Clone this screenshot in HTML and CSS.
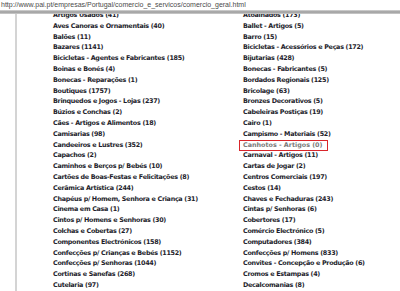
FILE: index.html
```html
<!DOCTYPE html>
<html lang="pt">
<head>
    <meta charset="UTF-8">
    <title>Comércio Geral</title>
    <link rel="stylesheet" href="styles.css">
</head>
<body>

<div class="address">http://www.pai.pt/empresas/Portugal/comercio_e_servicos/comercio_geral.html</div>
<div class="rule"></div>

<div class="page">
    <div class="list">
        <ul class="col">
            <li>Artigos Usados (41)</li>
            <li>Aves Canoras e Ornamentais (40)</li>
            <li>Balões (11)</li>
            <li>Bazares (1141)</li>
            <li>Bicicletas - Agentes e Fabricantes (185)</li>
            <li>Boinas e Bonés (4)</li>
            <li>Bonecas - Reparações (1)</li>
            <li>Boutiques (1757)</li>
            <li>Brinquedos e Jogos - Lojas (237)</li>
            <li>Búzios e Conchas (2)</li>
            <li>Cães - Artigos e Alimentos (18)</li>
            <li>Camisarias (98)</li>
            <li>Candeeiros e Lustres (352)</li>
            <li>Capachos (2)</li>
            <li>Caminhos e Berços p/ Bebés (10)</li>
            <li>Cartões de Boas-Festas e Felicitações (8)</li>
            <li>Cerâmica Artística (244)</li>
            <li>Chapéus p/ Homem, Senhora e Criança (31)</li>
            <li>Cinema em Casa (1)</li>
            <li>Cintos p/ Homens e Senhoras (30)</li>
            <li>Colchas e Cobertas (27)</li>
            <li>Componentes Electrónicos (158)</li>
            <li>Confecções p/ Crianças e Bebés (1152)</li>
            <li>Confecções p/ Senhoras (1044)</li>
            <li>Cortinas e Sanefas (268)</li>
            <li>Cutelaria (97)</li>
        </ul>
        <ul class="col">
            <li>Atoalhados (173)</li>
            <li>Ballet - Artigos (5)</li>
            <li>Barro (15)</li>
            <li>Bicicletas - Acessórios e Peças (172)</li>
            <li>Bijutarias (428)</li>
            <li>Bonecas - Fabricantes (5)</li>
            <li>Bordados Regionais (125)</li>
            <li>Bricolage (63)</li>
            <li>Bronzes Decorativos (5)</li>
            <li>Cabeleiras Postiças (19)</li>
            <li>Cairo (1)</li>
            <li>Campismo - Materiais (52)</li>
            <li><span class="marked">Canhotos - Artigos (0)</span></li>
            <li>Carnaval - Artigos (11)</li>
            <li>Cartas de Jogar (2)</li>
            <li>Centros Comerciais (197)</li>
            <li>Cestos (14)</li>
            <li>Chaves e Fechaduras (243)</li>
            <li>Cintas p/ Senhoras (6)</li>
            <li>Cobertores (17)</li>
            <li>Comércio Electrónico (5)</li>
            <li>Computadores (384)</li>
            <li>Confecções p/ Homens (833)</li>
            <li>Convites - Concepção e Produção (6)</li>
            <li>Cromos e Estampas (4)</li>
            <li>Decalcomanias (8)</li>
        </ul>
    </div>
</div>

</body>
</html>
```

FILE: styles.css
```css
/* Página de categorias, recorte de ecrã */
body {
    margin: 0;
    padding: 0;
    background-color: #ffffff;
    font-family: "DejaVu Sans", Verdana, sans-serif;
    overflow: hidden;
}

.address {
    height: 10px;
    padding-left: 1px;
    font-family: "Liberation Sans", Arial, sans-serif;
    font-size: 7px;
    line-height: 10px;
    color: #4a4a4a;
    white-space: nowrap;
}

.rule {
    height: 4px;
    background: linear-gradient(#d8d8d8, #9a9a9a 50%, #d0d0d0);
}

.page {
    height: 277px;
    overflow: hidden;
    margin-left: 15px;
    border-left: 2px solid #d4d4d4;
}

.list {
    display: grid;
    grid-template-columns: 190px 1fr;
    padding-left: 36px;
    margin-top: -4px;
}

.col {
    list-style: none;
    margin: 0;
    padding: 0;
}

.col li {
    height: 10.8px;
    line-height: 10.8px;
    font-size: 6.4px;
    font-weight: bold;
    letter-spacing: -0.3px;
    color: #1d1d2b;
    white-space: nowrap;
}

.marked {
    display: inline-block;
    margin-left: -4px;
    padding: 0 5px 0 3px;
    line-height: 9px;
    border: 1px solid #d9262b;
    color: #7a7a7a;
    letter-spacing: 0;
}
```
